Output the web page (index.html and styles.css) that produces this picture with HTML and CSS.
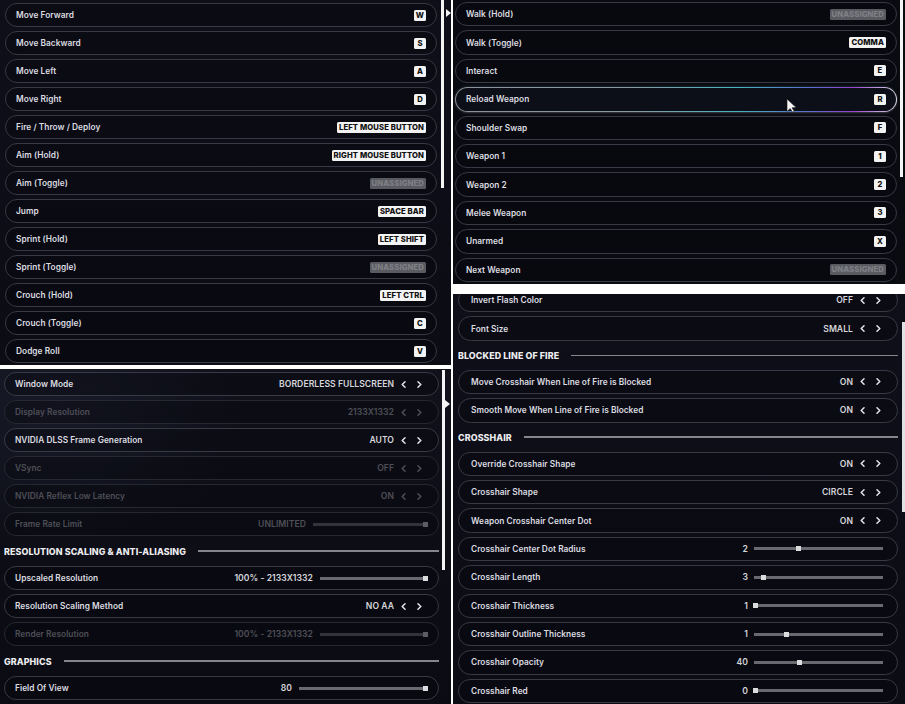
FILE: index.html
```html
<!DOCTYPE html>
<html lang="en">
<head>
<meta charset="utf-8">
<title>Settings</title>
<link rel="stylesheet" href="styles.css">
</head>
<body>
<div class="collage">
  <div class="col col-left">
    <section class="panel p-tl">
      <div class="list">
        <div class="row"><span class="label">Move Forward</span><span class="key">W</span></div>
        <div class="row"><span class="label">Move Backward</span><span class="key">S</span></div>
        <div class="row"><span class="label">Move Left</span><span class="key">A</span></div>
        <div class="row"><span class="label">Move Right</span><span class="key">D</span></div>
        <div class="row"><span class="label">Fire / Throw / Deploy</span><span class="key">LEFT MOUSE BUTTON</span></div>
        <div class="row"><span class="label">Aim (Hold)</span><span class="key">RIGHT MOUSE BUTTON</span></div>
        <div class="row"><span class="label">Aim (Toggle)</span><span class="key key-none">UNASSIGNED</span></div>
        <div class="row"><span class="label">Jump</span><span class="key">SPACE BAR</span></div>
        <div class="row"><span class="label">Sprint (Hold)</span><span class="key">LEFT SHIFT</span></div>
        <div class="row"><span class="label">Sprint (Toggle)</span><span class="key key-none">UNASSIGNED</span></div>
        <div class="row"><span class="label">Crouch (Hold)</span><span class="key">LEFT CTRL</span></div>
        <div class="row"><span class="label">Crouch (Toggle)</span><span class="key">C</span></div>
        <div class="row"><span class="label">Dodge Roll</span><span class="key">V</span></div>
      </div>
      <div class="thumb thumb-tl"></div>
      <div class="tri tri-tl"></div>
    </section>
    <section class="panel p-bl">
      <div class="list">
        <div class="row"><span class="label">Window Mode</span><span class="opt"><span class="val">BORDERLESS FULLSCREEN</span><svg class="chev" viewBox="0 0 5 7"><path d="M4 .8 1.2 3.5 4 6.2"/></svg><svg class="chev" viewBox="0 0 5 7"><path d="M1 .8 3.8 3.5 1 6.2"/></svg></span></div>
        <div class="row dim"><span class="label">Display Resolution</span><span class="opt"><span class="val">2133X1332</span><svg class="chev" viewBox="0 0 5 7"><path d="M4 .8 1.2 3.5 4 6.2"/></svg><svg class="chev" viewBox="0 0 5 7"><path d="M1 .8 3.8 3.5 1 6.2"/></svg></span></div>
        <div class="row"><span class="label">NVIDIA DLSS Frame Generation</span><span class="opt"><span class="val">AUTO</span><svg class="chev" viewBox="0 0 5 7"><path d="M4 .8 1.2 3.5 4 6.2"/></svg><svg class="chev" viewBox="0 0 5 7"><path d="M1 .8 3.8 3.5 1 6.2"/></svg></span></div>
        <div class="row dim"><span class="label">VSync</span><span class="opt"><span class="val">OFF</span><svg class="chev" viewBox="0 0 5 7"><path d="M4 .8 1.2 3.5 4 6.2"/></svg><svg class="chev" viewBox="0 0 5 7"><path d="M1 .8 3.8 3.5 1 6.2"/></svg></span></div>
        <div class="row dim"><span class="label">NVIDIA Reflex Low Latency</span><span class="opt"><span class="val">ON</span><svg class="chev" viewBox="0 0 5 7"><path d="M4 .8 1.2 3.5 4 6.2"/></svg><svg class="chev" viewBox="0 0 5 7"><path d="M1 .8 3.8 3.5 1 6.2"/></svg></span></div>
        <div class="row dim"><span class="label">Frame Rate Limit</span><span class="sl"><span class="val">UNLIMITED</span><span class="track w115"><span class="knob" style="left:100%"></span></span></span></div>
        <div class="head"><span class="head-t">RESOLUTION SCALING &amp; ANTI-ALIASING</span><span class="head-line"></span></div>
        <div class="row"><span class="label">Upscaled Resolution</span><span class="sl"><span class="val">100% - 2133X1332</span><span class="track w108"><span class="knob" style="left:100%"></span></span></span></div>
        <div class="row"><span class="label">Resolution Scaling Method</span><span class="opt"><span class="val">NO AA</span><svg class="chev" viewBox="0 0 5 7"><path d="M4 .8 1.2 3.5 4 6.2"/></svg><svg class="chev" viewBox="0 0 5 7"><path d="M1 .8 3.8 3.5 1 6.2"/></svg></span></div>
        <div class="row dim"><span class="label">Render Resolution</span><span class="sl"><span class="val">100% - 2133X1332</span><span class="track w108"><span class="knob" style="left:100%"></span></span></span></div>
        <div class="head"><span class="head-t">GRAPHICS</span><span class="head-line"></span></div>
        <div class="row"><span class="label">Field Of View</span><span class="sl"><span class="val">80</span><span class="track w129"><span class="knob" style="left:100%"></span></span></span></div>
        <div class="row"></div>
      </div>
      <div class="thumb thumb-bl"></div>
      <div class="tri tri-bl"></div>
    </section>
  </div>
  <div class="col col-right">
    <section class="panel p-tr">
      <div class="list">
        <div class="row"><span class="label">Walk (Hold)</span><span class="key key-none">UNASSIGNED</span></div>
        <div class="row"><span class="label">Walk (Toggle)</span><span class="key">COMMA</span></div>
        <div class="row"><span class="label">Interact</span><span class="key">E</span></div>
        <div class="row hot"><span class="label">Reload Weapon</span><span class="key">R</span></div>
        <div class="row"><span class="label">Shoulder Swap</span><span class="key">F</span></div>
        <div class="row"><span class="label">Weapon 1</span><span class="key">1</span></div>
        <div class="row"><span class="label">Weapon 2</span><span class="key">2</span></div>
        <div class="row"><span class="label">Melee Weapon</span><span class="key">3</span></div>
        <div class="row"><span class="label">Unarmed</span><span class="key">X</span></div>
        <div class="row"><span class="label">Next Weapon</span><span class="key key-none">UNASSIGNED</span></div>
      </div>
      <div class="thumb thumb-tr"></div>
      <svg class="cursor" viewBox="0 0 11 15"><path d="M1 1 1 13.5 4.2 10.6 6.6 14.2 8.3 13.3 6 9.8 10.2 9.6Z"/></svg>
    </section>
    <section class="panel p-br">
      <div class="list">
        <div class="row"><span class="label">Invert Flash Color</span><span class="opt"><span class="val">OFF</span><svg class="chev" viewBox="0 0 5 7"><path d="M4 .8 1.2 3.5 4 6.2"/></svg><svg class="chev" viewBox="0 0 5 7"><path d="M1 .8 3.8 3.5 1 6.2"/></svg></span></div>
        <div class="row"><span class="label">Font Size</span><span class="opt"><span class="val">SMALL</span><svg class="chev" viewBox="0 0 5 7"><path d="M4 .8 1.2 3.5 4 6.2"/></svg><svg class="chev" viewBox="0 0 5 7"><path d="M1 .8 3.8 3.5 1 6.2"/></svg></span></div>
        <div class="head"><span class="head-t">BLOCKED LINE OF FIRE</span><span class="head-line"></span></div>
        <div class="row"><span class="label">Move Crosshair When Line of Fire is Blocked</span><span class="opt"><span class="val">ON</span><svg class="chev" viewBox="0 0 5 7"><path d="M4 .8 1.2 3.5 4 6.2"/></svg><svg class="chev" viewBox="0 0 5 7"><path d="M1 .8 3.8 3.5 1 6.2"/></svg></span></div>
        <div class="row"><span class="label">Smooth Move When Line of Fire is Blocked</span><span class="opt"><span class="val">ON</span><svg class="chev" viewBox="0 0 5 7"><path d="M4 .8 1.2 3.5 4 6.2"/></svg><svg class="chev" viewBox="0 0 5 7"><path d="M1 .8 3.8 3.5 1 6.2"/></svg></span></div>
        <div class="head"><span class="head-t">CROSSHAIR</span><span class="head-line"></span></div>
        <div class="row"><span class="label">Override Crosshair Shape</span><span class="opt"><span class="val">ON</span><svg class="chev" viewBox="0 0 5 7"><path d="M4 .8 1.2 3.5 4 6.2"/></svg><svg class="chev" viewBox="0 0 5 7"><path d="M1 .8 3.8 3.5 1 6.2"/></svg></span></div>
        <div class="row"><span class="label">Crosshair Shape</span><span class="opt"><span class="val">CIRCLE</span><svg class="chev" viewBox="0 0 5 7"><path d="M4 .8 1.2 3.5 4 6.2"/></svg><svg class="chev" viewBox="0 0 5 7"><path d="M1 .8 3.8 3.5 1 6.2"/></svg></span></div>
        <div class="row"><span class="label">Weapon Crosshair Center Dot</span><span class="opt"><span class="val">ON</span><svg class="chev" viewBox="0 0 5 7"><path d="M4 .8 1.2 3.5 4 6.2"/></svg><svg class="chev" viewBox="0 0 5 7"><path d="M1 .8 3.8 3.5 1 6.2"/></svg></span></div>
        <div class="row"><span class="label">Crosshair Center Dot Radius</span><span class="sl sl-r"><span class="val">2</span><span class="track w129"><span class="knob" style="left:34%"></span></span></span></div>
        <div class="row"><span class="label">Crosshair Length</span><span class="sl sl-r"><span class="val">3</span><span class="track w129"><span class="knob" style="left:7%"></span></span></span></div>
        <div class="row"><span class="label">Crosshair Thickness</span><span class="sl sl-r"><span class="val">1</span><span class="track w129"><span class="knob" style="left:1%"></span></span></span></div>
        <div class="row"><span class="label">Crosshair Outline Thickness</span><span class="sl sl-r"><span class="val">1</span><span class="track w129"><span class="knob" style="left:25%"></span></span></span></div>
        <div class="row"><span class="label">Crosshair Opacity</span><span class="sl sl-r"><span class="val">40</span><span class="track w129"><span class="knob" style="left:35%"></span></span></span></div>
        <div class="row"><span class="label">Crosshair Red</span><span class="sl sl-r"><span class="val">0</span><span class="track w129"><span class="knob" style="left:1%"></span></span></span></div>
      </div>
      <div class="thumb thumb-br"></div>
    </section>
  </div>
</div>
</body>
</html>
```

FILE: styles.css
```css
* { box-sizing: border-box; }
html, body { margin: 0; padding: 0; background: #ffffff; }
body {
  font-family: Inter, "Noto Sans", "Liberation Sans", sans-serif;
  color: #d6d6da;
}
.collage {
  width: 905px;
  height: 704px;
  display: flex;
  gap: 2px;
  overflow: hidden;
}
.col { display: flex; flex-direction: column; }
.col-left { width: 451px; gap: 4px; }
.col-right { flex: 1; gap: 10px; }

.panel {
  position: relative;
  overflow: hidden;
  background: linear-gradient(180deg, #0e0f19 0%, #0b0c14 100%);
  --row-h: 24px;
  --gap: 4px;
  --head-h: 22px;
}
.p-tl { height: 365px; padding: 3px 14px 0 5px; }
.p-bl {
  flex: 1;
  padding: 3px 12px 0 4px;
  background:
    radial-gradient(ellipse 260px 200px at 60px 40px, rgba(40, 44, 66, 0.35), transparent 70%),
    linear-gradient(180deg, #10111b 0%, #0c0d15 60%, #0b0c13 100%);
}
.p-tr { height: 284px; padding: 2px 8px 0 2px; background: #0a0b11; --row-h: 24.4px; --head-h: 21px; }
.p-br { flex: 1; padding: 0 7px 0 5px; --row-h: 24.4px; --head-h: 21px; }
.p-br .list { margin-top: -6px; }
.p-br .row { padding-left: 12px; }

.list { display: flex; flex-direction: column; gap: var(--gap); }

.row {
  flex: none;
  height: var(--row-h);
  border: 1px solid #373944;
  border-radius: 13px;
  background: rgba(5, 6, 12, 0.35);
  display: flex;
  align-items: center;
  justify-content: space-between;
  padding: 0 10px;
  white-space: nowrap;
}
.label {
  font-size: 8.3px;
  font-weight: 600;
  letter-spacing: 0.05px;
  color: #dcdce0;
}
.key {
  height: 11px;
  line-height: 11px;
  padding: 0 2px;
  border-radius: 1.5px;
  background: #f3f3f3;
  color: #101010;
  font-size: 7.7px;
  font-weight: 800;
  letter-spacing: 0.1px;
  min-width: 12px;
  text-align: center;
}
.key-none {
  background: #5a5b61;
  color: #7f8086;
}

.opt { display: flex; align-items: center; margin-right: 6px; }
.val {
  font-size: 8.6px;
  font-weight: 600;
  color: #d6d6da;
  letter-spacing: 0.05px;
}
.chev {
  width: 5px;
  height: 7px;
  fill: none;
  stroke: #e4e4e8;
  stroke-width: 1.5;
  stroke-linecap: round;
  stroke-linejoin: round;
}
.opt .val + .chev { margin-left: 7px; }
.chev + .chev { margin-left: 11px; }

.sl { display: flex; align-items: center; gap: 7px; }
.sl-r { margin-right: 4px; gap: 6px; }
.track {
  position: relative;
  height: 3px;
  background: #696a70;
}
.w108 { width: 108px; }
.w115 { width: 115px; }
.w129 { width: 129px; }
.knob {
  position: absolute;
  top: -1px;
  width: 5px;
  height: 5px;
  margin-left: -5px;
  background: #dcdcde;
}
.sl-r .knob { margin-left: -2px; }

.row.dim { border-color: #262831; }
.dim .label, .dim .val { color: #4e4f57; }
.dim .chev { stroke: #4e4f57; }
.dim .track { background: #33343a; }
.dim .knob { background: #5c5d63; }

.row.hot {
  border: 1.5px solid transparent;
  background:
    linear-gradient(#0d0f18, #0d0f18) padding-box,
    linear-gradient(90deg, #8e9098 0%, #8a9aa2 40%, #45b3bd 64%, #5a70cc 80%, #9a40cf 90%, #dcdce4 100%) border-box;
  box-shadow: 0 1px 2px rgba(210, 215, 225, 0.25), 0 -1px 2px rgba(90, 170, 190, 0.15);
}

.head {
  flex: none;
  height: var(--head-h);
  display: flex;
  align-items: center;
  gap: 12px;
}
.head-t {
  font-size: 8.9px;
  font-weight: 800;
  color: #ececef;
  letter-spacing: 0.1px;
  white-space: nowrap;
}
.head-line {
  flex: 1;
  height: 1.5px;
  background: #85868c;
}

.thumb { position: absolute; background: #f4f4f4; width: 3px; }
.thumb-tl { left: 441px; top: 0; height: 188px; }
.thumb-bl { left: 442px; top: 1px; height: 200px; }
.thumb-tr { left: 447px; top: 0; height: 177px; }
.thumb-br { left: 449px; top: 28px; height: 190px; background: #e2e2e4; }

.tri {
  position: absolute;
  width: 0;
  height: 0;
  border-top: 4px solid transparent;
  border-bottom: 4px solid transparent;
  border-left: 5px solid #f4f4f4;
}
.tri-tl { left: 446px; top: 9px; }
.tri-bl { left: 445px; top: 31px; }

.cursor {
  position: absolute;
  left: 333px;
  top: 98px;
  width: 11px;
  height: 15px;
  fill: #f6f6f6;
  stroke: #1a1a1a;
  stroke-width: 0.6;
}
```
